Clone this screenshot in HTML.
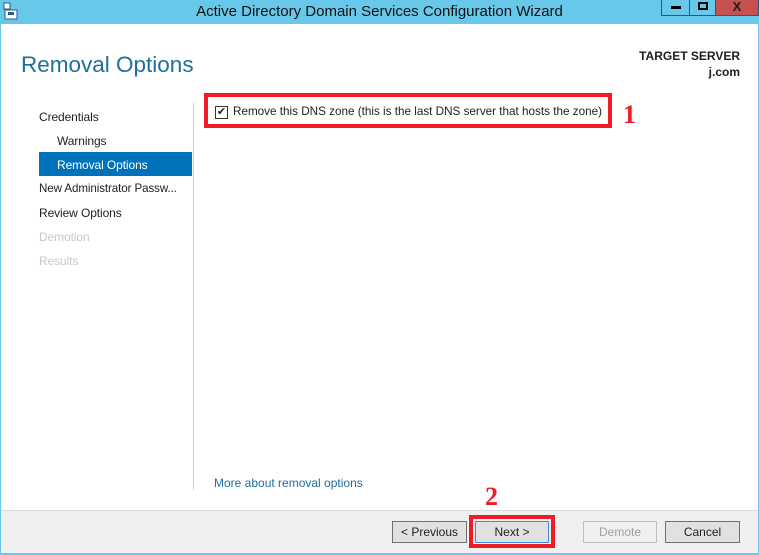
<!DOCTYPE html>
<html><head><style>
*{margin:0;padding:0;box-sizing:border-box}
body{width:759px;height:555px;position:relative;overflow:hidden;background:#fff;font-family:"Liberation Sans",sans-serif;font-size:12px;color:#1e1e1e}
.a{position:absolute}
.tb{left:0;top:0;width:759px;height:24px;background:#67c8ea}
.btn{position:absolute;height:24px;border:1px solid #2b5a6e;border-top:none;text-align:center;font-weight:bold}
.nav{left:39px;font-size:12px;height:24px;line-height:24px;letter-spacing:-0.1px}
.fb{position:absolute;top:521px;height:22px;border:1px solid #707070;background:#e1e1e1;text-align:center;line-height:20px;font-size:12px}
</style></head><body>
<div class="a tb"></div>
<svg class="a" style="left:3px;top:2px" width="16" height="18"><rect x="1" y="1" width="6" height="6" fill="#fff" stroke="#2a5d8a"/><rect x="2" y="8" width="12" height="9" fill="#fff" stroke="#2a5d8a"/><rect x="5" y="10" width="6" height="3" fill="#2a5d8a"/></svg>
<div class="a" style="left:0;width:759px;top:3px;text-align:center;font-size:15px;color:#111">Active Directory Domain Services Configuration Wizard</div>
<div class="btn" style="left:661px;width:29px;height:16px;background:#67c8ea"><div class="a" style="left:9px;top:6px;width:10px;height:3px;background:#000"></div></div>
<div class="btn" style="left:689px;width:27px;height:16px;background:#67c8ea"><div class="a" style="left:8px;top:2px;width:10px;height:8px;border:2px solid #000"></div></div>
<div class="btn" style="left:715px;width:44px;height:16px;background:#c75050;font-size:13px;line-height:13px">X</div>
<div class="a" style="left:0;top:24px;width:1px;height:531px;background:#67c8ea"></div>
<div class="a" style="left:758px;top:24px;width:1px;height:531px;background:#67c8ea"></div>
<div class="a" style="left:21px;top:52px;font-size:22.5px;color:#1e6f9a;font-weight:300">Removal Options</div>
<div class="a" style="right:19px;top:49px;font-size:12px;font-weight:bold">TARGET SERVER</div>
<div class="a" style="right:19px;top:65px;font-size:12px;font-weight:bold">j.com</div>
<div class="a nav" style="top:105px">Credentials</div>
<div class="a nav" style="left:57px;top:129px">Warnings</div>
<div class="a" style="left:39px;top:152px;width:153px;height:24px;background:#0072bc"></div>
<div class="a nav" style="left:57px;top:153px;color:#fff">Removal Options</div>
<div class="a nav" style="top:177px;font-size:11.6px">New Administrator Passw...</div>
<div class="a nav" style="top:201px">Review Options</div>
<div class="a nav" style="top:225px;color:#c8c8c8">Demotion</div>
<div class="a nav" style="top:249px;color:#c8c8c8">Results</div>
<div class="a" style="left:193px;top:103px;width:1px;height:387px;background:#d0d0d0"></div>
<div class="a" style="left:204px;top:93px;width:408px;height:35px;border:4px solid #ee1c25"></div>
<div class="a" style="left:215px;top:106px;width:13px;height:13px;border:1px solid #333;background:#fff;font-size:11px;line-height:11px;text-align:center">✔</div>
<div class="a" style="left:233px;top:105px;font-size:11.7px">Remove this DNS zone (this is the last DNS server that hosts the zone)</div>
<div class="a" style="left:623px;top:100px;font-size:26px;font-weight:bold;color:#ee1c25;font-family:'Liberation Serif',serif">1</div>
<div class="a" style="left:214px;top:476px;font-size:12px;color:#1e6f9a">More about removal options</div>
<div class="a" style="left:1px;top:510px;width:757px;height:43px;background:#f0f0f0;border-top:1px solid #dcdcdc"></div>
<div class="a" style="left:0;top:553px;width:759px;height:2px;background:#67c8ea"></div>
<div class="a" style="left:485px;top:482px;font-size:26px;font-weight:bold;color:#ee1c25;font-family:'Liberation Serif',serif">2</div>
<div class="fb" style="left:392px;width:75px">&lt; Previous</div>
<div class="a" style="left:469px;top:515px;width:86px;height:33px;border:4px solid #ee1c25"></div>
<div class="fb" style="left:475px;width:74px;border-color:#3c8fd8">Next &gt;</div>
<div class="fb" style="left:583px;width:74px;border-color:#bfbfbf;background:#f0f0f0;color:#a0a0a0">Demote</div>
<div class="fb" style="left:665px;width:75px">Cancel</div>
</body></html>
